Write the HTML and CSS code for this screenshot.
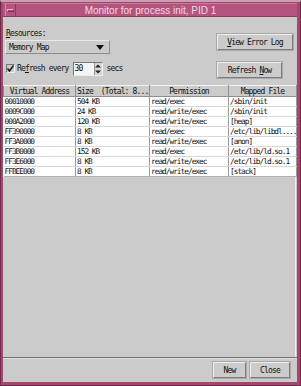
FILE: index.html
```html
<!DOCTYPE html>
<html lang="en">

<head>
    <meta charset="UTF-8">
    <meta name="viewport" content="width=device-width, initial-scale=1.0">
    <title>Monitor for process init, PID 1</title>
    <link rel="stylesheet" href="styles.css">
</head>

<body>
    <div class="window">
        <div class="titlebar">
            <span class="menu-btn"><span class="menu-dash"></span></span>
            <span class="title">Monitor for process init, PID 1</span>
        </div>

        <div class="client">
            <div class="controls">
                <div class="controls-left">
                    <div class="label"><u>R</u>esources:</div>
                    <div class="select">
                        <span>Memory Map</span>
                        <svg class="arrow" width="8" height="5" viewBox="0 0 8 5">
                            <path d="M0 0h8L4 5z" fill="#111" />
                        </svg>
                    </div>
                    <div class="refresh-row">
                        <span class="checkbox">
                            <svg width="9" height="9" viewBox="0 0 9 9">
                                <path d="M1.5 4.5 3.5 7 7.5 1.5" fill="none" stroke="#111" stroke-width="1.4" />
                            </svg>
                        </span>
                        <span class="check-label">Re<u>f</u>resh every</span>
                        <span class="spinner">
                            <span class="spin-value">30</span>
                            <span class="spin-btns">
                                <svg width="6" height="12" viewBox="0 0 6 12">
                                    <path d="M0 4.5 3 1.5 6 4.5z M0 7.5 3 10.5 6 7.5z" fill="#222" />
                                </svg>
                            </span>
                        </span>
                        <span class="secs">secs</span>
                    </div>
                </div>
                <div class="controls-right">
                    <button class="btn btn-log"><u>V</u>iew Error Log</button>
                    <button class="btn btn-refresh">Refresh <u>N</u>ow</button>
                </div>
            </div>

            <div class="table-pane">
                <table class="map-table">
                    <thead>
                        <tr>
                            <th class="col-addr">Virtual Address</th>
                            <th class="col-size left">Size &nbsp;(Total: 8...</th>
                            <th class="col-perm">Permission</th>
                            <th class="col-file">Mapped File</th>
                        </tr>
                    </thead>
                    <tbody>
                        <tr><td>00010000</td><td>504 KB</td><td>read/exec</td><td>/sbin/init</td></tr>
                        <tr><td>0009C000</td><td>24 KB</td><td>read/write/exec</td><td>/sbin/init</td></tr>
                        <tr><td>000A2000</td><td>120 KB</td><td>read/write/exec</td><td>[heap]</td></tr>
                        <tr><td>FF390000</td><td>8 KB</td><td>read/exec</td><td>/etc/lib/libdl....</td></tr>
                        <tr><td>FF3A0000</td><td>8 KB</td><td>read/write/exec</td><td>[anon]</td></tr>
                        <tr><td>FF3B0000</td><td>152 KB</td><td>read/exec</td><td>/etc/lib/ld.so.1</td></tr>
                        <tr><td>FF3E6000</td><td>8 KB</td><td>read/write/exec</td><td>/etc/lib/ld.so.1</td></tr>
                        <tr><td>FFBEE000</td><td>8 KB</td><td>read/write/exec</td><td>[stack]</td></tr>
                    </tbody>
                </table>
            </div>

            <div class="footer">
                <button class="btn btn-new">New</button>
                <button class="btn btn-close">Close</button>
            </div>
        </div>
    </div>
</body>

</html>
```

FILE: styles.css
```css
* {
    box-sizing: border-box;
}

body {
    margin: 0;
    background-color: #a3476f;
}

.window {
    width: 301px;
    height: 386px;
    display: flex;
    flex-direction: column;
    background-color: #a3476f;
    border-top: 2px solid #c7a0b2;
    border-left: 1px solid #6e2a49;
    border-right: 1px solid #6e2a49;
    border-bottom: 1px solid #6e2a49;
    padding: 1px 3px 3px 2px;
    font-family: "DejaVu Sans Mono", "Liberation Mono", monospace;
    font-size: 8px;
    letter-spacing: -0.85px;
    color: #111;
}

.titlebar {
    height: 14px;
    display: flex;
    align-items: center;
    background-color: #b5557f;
    border-top: 1px solid #c97a9c;
    border-bottom: 1px solid #8d3a5e;
}

.menu-btn {
    width: 11px;
    height: 12px;
    margin-left: 2px;
    border-right: 1px solid #8d3a5e;
    border-left: 1px solid #d18aa8;
    display: flex;
    align-items: center;
    justify-content: center;
}

.menu-dash {
    width: 7px;
    height: 3px;
    border: 1px solid #e4b9cc;
    border-bottom-color: #7a2f50;
    border-right-color: #7a2f50;
}

.title {
    flex: 1;
    text-align: center;
    font-family: "Liberation Sans", Arial, sans-serif;
    font-size: 10px;
    letter-spacing: 0;
    color: #f1d9e4;
    margin-right: 12px;
}

.client {
    flex: 1;
    display: flex;
    flex-direction: column;
    background-color: #cbcbcb;
}

.controls {
    display: flex;
    justify-content: space-between;
    padding: 12px 4px 0 2px;
    height: 68px;
}

.label {
    line-height: 10px;
    height: 11px;
    padding-left: 1px;
}

.select {
    width: 105px;
    height: 14px;
    display: flex;
    align-items: center;
    justify-content: space-between;
    padding: 0 5px 0 3px;
    border: 1px solid #e9e9e9;
    border-right-color: #8c8c8c;
    border-bottom-color: #8c8c8c;
}

.refresh-row {
    display: flex;
    align-items: center;
    margin-top: 7px;
    height: 15px;
}

.checkbox {
    width: 9px;
    height: 9px;
    margin-left: 1px;
    margin-right: 2px;
    border: 1px solid #777;
    border-right-color: #eee;
    border-bottom-color: #eee;
    display: flex;
}

.checkbox svg {
    margin: -1px;
}

.spinner {
    width: 30px;
    height: 14px;
    margin-left: 4px;
    display: flex;
    align-items: center;
    justify-content: space-between;
    background-color: #f4f4f4;
    border: 1px solid #777;
    border-right-color: #eee;
    border-bottom-color: #eee;
    padding-left: 1px;
}

.spin-btns {
    width: 8px;
    height: 12px;
    display: flex;
    justify-content: center;
    background-color: #d6d6d6;
    border-left: 1px solid #999;
}

.secs {
    margin-left: 4px;
}

.controls-right {
    width: 76px;
    display: flex;
    flex-direction: column;
    align-items: flex-start;
    padding-top: 5px;
    gap: 12px;
}

.btn {
    font-family: inherit;
    font-size: inherit;
    letter-spacing: inherit;
    color: #111;
    background-color: #cbcbcb;
    border: 1px solid #eeeeee;
    border-right-color: #7c7c7c;
    border-bottom-color: #7c7c7c;
    outline: 1px solid #a9a9a9;
    padding: 0;
    margin: 0;
    height: 16px;
}

.btn-log {
    width: 76px;
}

.btn-refresh {
    width: 65px;
}

.table-pane {
    flex: 1;
    margin-right: 1px;
    border-right: 1px solid #eeeeee;
}

.map-table {
    width: 293px;
    border-collapse: collapse;
    table-layout: fixed;
    background-color: #ffffff;
}

.map-table th {
    height: 11px;
    padding: 0 1px;
    font-weight: normal;
    text-align: center;
    line-height: 9px;
    background-color: #cbcbcb;
    border: 1px solid #8f8f8f;
    border-top-color: #f2f2f2;
    white-space: nowrap;
    overflow: hidden;
}

.map-table th.left {
    text-align: left;
}

.map-table td {
    height: 10px;
    padding: 0 0 0 1px;
    font-size: 7.8px;
    letter-spacing: -1px;
    line-height: 9px;
    border-bottom: 1px solid #d8d8d8;
    border-right: 1px solid #9a9a9a;
    white-space: nowrap;
    overflow: hidden;
}

.map-table tr:last-child td {
    border-bottom-color: #b0b0b0;
}

.col-addr {
    width: 72px;
}

.col-size {
    width: 74px;
}

.col-perm {
    width: 79px;
}

.col-file {
    width: 68px;
}

.footer {
    height: 25px;
    display: flex;
    justify-content: flex-end;
    align-items: center;
    gap: 4px;
    padding-right: 7px;
    border-top: 1px solid #6f6f6f;
    box-shadow: inset 0 1px 0 #e2e2e2;
}

.btn-new {
    width: 33px;
}

.btn-close {
    width: 40px;
}
```
